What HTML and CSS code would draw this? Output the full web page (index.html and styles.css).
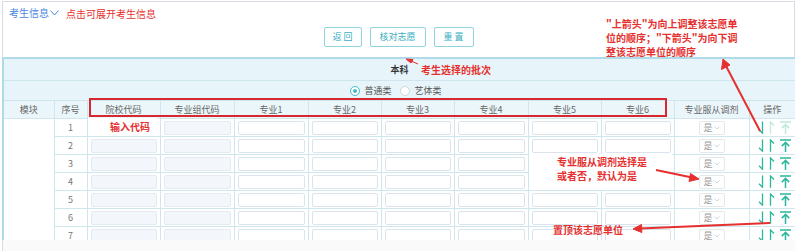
FILE: index.html
```html
<!DOCTYPE html>
<html lang="zh-CN">
<head>
<meta charset="utf-8">
<title>志愿填报</title>
<link rel="stylesheet" href="styles.css">
</head>
<body>
<div class="page">
  <div class="top">
    <div class="info">考生信息<svg class="info-chev" width="9" height="6" viewBox="0 0 9 6"><path d="M0.6 0.6L4.5 5L8.4 0.6" fill="none" stroke="#4a86e0" stroke-width="1"/></svg></div>
    <div class="actions">
      <button class="btn btn-back">返 回</button>
      <button class="btn btn-check">核对志愿</button>
      <button class="btn btn-reset">重 置</button>
    </div>
  </div>
  <div class="table-wrap">
    <table class="tbl">
      <colgroup>
        <col class="c-mod"><col class="c-idx"><col class="c-code"><col class="c-code2">
        <col class="c-m1"><col class="c-m2"><col class="c-m3"><col class="c-m4"><col class="c-m5"><col class="c-m6">
        <col class="c-adj"><col class="c-ops">
      </colgroup>
      <tr class="batch"><td colspan="12">本科</td></tr>
      <tr class="type"><td colspan="12">
        <span class="radios">
          <span class="radio on"><span class="dot"></span></span><span class="rlabel">普通类</span>
          <span class="radio"></span><span class="rlabel">艺体类</span>
        </span>
      </td></tr>
      <tr class="head">
        <th>模块</th><th>序号</th><th>院校代码</th><th>专业组代码</th>
        <th>专业1</th><th>专业2</th><th>专业3</th><th>专业4</th><th>专业5</th><th>专业6</th>
        <th>专业服从调剂</th><th>操作</th>
      </tr>
      <tr class="row">
        <td class="mod" rowspan="7"></td>
        <td class="idx">1</td>
        <td><div class="ipt fill"></div></td><td><div class="ipt fill"></div></td>
        <td><div class="ipt"></div></td><td><div class="ipt"></div></td><td><div class="ipt"></div></td>
        <td><div class="ipt"></div></td><td><div class="ipt"></div></td><td><div class="ipt"></div></td>
        <td><span class="sel">是<svg width="6" height="4" viewBox="0 0 6 4"><path d="M0.5 0.5L3 3L5.5 0.5" fill="none" stroke="#ccd1d7" stroke-width="0.9"/></svg></span></td>
        <td class="ops"><span class="op-icons">
          <svg class="op" width="6" height="13" viewBox="0 0 6 13"><path d="M4.5 0.5V12.2L1 8.7" fill="none" stroke="currentColor" stroke-width="1.3"/></svg>
          <svg class="op off" width="6" height="13" viewBox="0 0 6 13"><path d="M1.5 12.8V1L5 4.5" fill="none" stroke="currentColor" stroke-width="1.3"/></svg>
          <svg class="op off" width="11" height="13" viewBox="0 0 11 13"><path d="M0 1H11M5.5 13V3.4M1.8 7.1L5.5 3.4L9.2 7.1" fill="none" stroke="currentColor" stroke-width="1.5"/></svg>
        </span></td>
      </tr>
      <tr class="row">
        <td class="idx">2</td>
        <td><div class="ipt fill"></div></td><td><div class="ipt fill"></div></td>
        <td><div class="ipt"></div></td><td><div class="ipt"></div></td><td><div class="ipt"></div></td>
        <td><div class="ipt"></div></td><td><div class="ipt"></div></td><td><div class="ipt"></div></td>
        <td><span class="sel">是<svg width="6" height="4" viewBox="0 0 6 4"><path d="M0.5 0.5L3 3L5.5 0.5" fill="none" stroke="#ccd1d7" stroke-width="0.9"/></svg></span></td>
        <td class="ops"><span class="op-icons">
          <svg class="op" width="6" height="13" viewBox="0 0 6 13"><path d="M4.5 0.5V12.2L1 8.7" fill="none" stroke="currentColor" stroke-width="1.3"/></svg>
          <svg class="op" width="6" height="13" viewBox="0 0 6 13"><path d="M1.5 12.8V1L5 4.5" fill="none" stroke="currentColor" stroke-width="1.3"/></svg>
          <svg class="op" width="11" height="13" viewBox="0 0 11 13"><path d="M0 1H11M5.5 13V3.4M1.8 7.1L5.5 3.4L9.2 7.1" fill="none" stroke="currentColor" stroke-width="1.5"/></svg>
        </span></td>
      </tr>
      <tr class="row">
        <td class="idx">3</td>
        <td><div class="ipt fill"></div></td><td><div class="ipt fill"></div></td>
        <td><div class="ipt"></div></td><td><div class="ipt"></div></td><td><div class="ipt"></div></td>
        <td><div class="ipt"></div></td><td><div class="ipt"></div></td><td><div class="ipt"></div></td>
        <td><span class="sel">是<svg width="6" height="4" viewBox="0 0 6 4"><path d="M0.5 0.5L3 3L5.5 0.5" fill="none" stroke="#ccd1d7" stroke-width="0.9"/></svg></span></td>
        <td class="ops"><span class="op-icons">
          <svg class="op" width="6" height="13" viewBox="0 0 6 13"><path d="M4.5 0.5V12.2L1 8.7" fill="none" stroke="currentColor" stroke-width="1.3"/></svg>
          <svg class="op" width="6" height="13" viewBox="0 0 6 13"><path d="M1.5 12.8V1L5 4.5" fill="none" stroke="currentColor" stroke-width="1.3"/></svg>
          <svg class="op" width="11" height="13" viewBox="0 0 11 13"><path d="M0 1H11M5.5 13V3.4M1.8 7.1L5.5 3.4L9.2 7.1" fill="none" stroke="currentColor" stroke-width="1.5"/></svg>
        </span></td>
      </tr>
      <tr class="row">
        <td class="idx">4</td>
        <td><div class="ipt fill"></div></td><td><div class="ipt fill"></div></td>
        <td><div class="ipt"></div></td><td><div class="ipt"></div></td><td><div class="ipt"></div></td>
        <td><div class="ipt"></div></td><td><div class="ipt"></div></td><td><div class="ipt"></div></td>
        <td><span class="sel">是<svg width="6" height="4" viewBox="0 0 6 4"><path d="M0.5 0.5L3 3L5.5 0.5" fill="none" stroke="#ccd1d7" stroke-width="0.9"/></svg></span></td>
        <td class="ops"><span class="op-icons">
          <svg class="op" width="6" height="13" viewBox="0 0 6 13"><path d="M4.5 0.5V12.2L1 8.7" fill="none" stroke="currentColor" stroke-width="1.3"/></svg>
          <svg class="op" width="6" height="13" viewBox="0 0 6 13"><path d="M1.5 12.8V1L5 4.5" fill="none" stroke="currentColor" stroke-width="1.3"/></svg>
          <svg class="op" width="11" height="13" viewBox="0 0 11 13"><path d="M0 1H11M5.5 13V3.4M1.8 7.1L5.5 3.4L9.2 7.1" fill="none" stroke="currentColor" stroke-width="1.5"/></svg>
        </span></td>
      </tr>
      <tr class="row">
        <td class="idx">5</td>
        <td><div class="ipt fill"></div></td><td><div class="ipt fill"></div></td>
        <td><div class="ipt"></div></td><td><div class="ipt"></div></td><td><div class="ipt"></div></td>
        <td><div class="ipt"></div></td><td><div class="ipt"></div></td><td><div class="ipt"></div></td>
        <td><span class="sel">是<svg width="6" height="4" viewBox="0 0 6 4"><path d="M0.5 0.5L3 3L5.5 0.5" fill="none" stroke="#ccd1d7" stroke-width="0.9"/></svg></span></td>
        <td class="ops"><span class="op-icons">
          <svg class="op" width="6" height="13" viewBox="0 0 6 13"><path d="M4.5 0.5V12.2L1 8.7" fill="none" stroke="currentColor" stroke-width="1.3"/></svg>
          <svg class="op" width="6" height="13" viewBox="0 0 6 13"><path d="M1.5 12.8V1L5 4.5" fill="none" stroke="currentColor" stroke-width="1.3"/></svg>
          <svg class="op" width="11" height="13" viewBox="0 0 11 13"><path d="M0 1H11M5.5 13V3.4M1.8 7.1L5.5 3.4L9.2 7.1" fill="none" stroke="currentColor" stroke-width="1.5"/></svg>
        </span></td>
      </tr>
      <tr class="row">
        <td class="idx">6</td>
        <td><div class="ipt fill"></div></td><td><div class="ipt fill"></div></td>
        <td><div class="ipt"></div></td><td><div class="ipt"></div></td><td><div class="ipt"></div></td>
        <td><div class="ipt"></div></td><td><div class="ipt"></div></td><td><div class="ipt"></div></td>
        <td><span class="sel">是<svg width="6" height="4" viewBox="0 0 6 4"><path d="M0.5 0.5L3 3L5.5 0.5" fill="none" stroke="#ccd1d7" stroke-width="0.9"/></svg></span></td>
        <td class="ops"><span class="op-icons">
          <svg class="op" width="6" height="13" viewBox="0 0 6 13"><path d="M4.5 0.5V12.2L1 8.7" fill="none" stroke="currentColor" stroke-width="1.3"/></svg>
          <svg class="op" width="6" height="13" viewBox="0 0 6 13"><path d="M1.5 12.8V1L5 4.5" fill="none" stroke="currentColor" stroke-width="1.3"/></svg>
          <svg class="op" width="11" height="13" viewBox="0 0 11 13"><path d="M0 1H11M5.5 13V3.4M1.8 7.1L5.5 3.4L9.2 7.1" fill="none" stroke="currentColor" stroke-width="1.5"/></svg>
        </span></td>
      </tr>
      <tr class="row">
        <td class="idx">7</td>
        <td><div class="ipt fill"></div></td><td><div class="ipt fill"></div></td>
        <td><div class="ipt"></div></td><td><div class="ipt"></div></td><td><div class="ipt"></div></td>
        <td><div class="ipt"></div></td><td><div class="ipt"></div></td><td><div class="ipt"></div></td>
        <td><span class="sel">是<svg width="6" height="4" viewBox="0 0 6 4"><path d="M0.5 0.5L3 3L5.5 0.5" fill="none" stroke="#ccd1d7" stroke-width="0.9"/></svg></span></td>
        <td class="ops"><span class="op-icons">
          <svg class="op" width="6" height="13" viewBox="0 0 6 13"><path d="M4.5 0.5V12.2L1 8.7" fill="none" stroke="currentColor" stroke-width="1.3"/></svg>
          <svg class="op" width="6" height="13" viewBox="0 0 6 13"><path d="M1.5 12.8V1L5 4.5" fill="none" stroke="currentColor" stroke-width="1.3"/></svg>
          <svg class="op" width="11" height="13" viewBox="0 0 11 13"><path d="M0 1H11M5.5 13V3.4M1.8 7.1L5.5 3.4L9.2 7.1" fill="none" stroke="currentColor" stroke-width="1.5"/></svg>
        </span></td>
      </tr>
    </table>
  </div>
  <div class="footer"></div>

  <!-- annotations -->
  <div class="note note-expand">点击可展开考生信息</div>
  <div class="note note-arrows">"上箭头"为向上调整该志愿单<br>位的顺序；"下箭头"为向下调<br>整该志愿单位的顺序</div>
  <div class="note note-batch">考生选择的批次</div>
  <div class="note note-code">输入代码</div>
  <div class="note note-adjust">专业服从调剂选择是<br>或者否，默认为是</div>
  <div class="note note-top">置顶该志愿单位</div>
  <div class="red-frame"></div>
  <svg class="arrows" width="797" height="251" viewBox="0 0 797 251">
    <g stroke="#e5302f" fill="#e5302f">
      <line x1="418" y1="64" x2="411" y2="61" stroke-width="1"/>
      <polygon points="406,59 413,59.5 411,63"/>
      <line x1="760" y1="131" x2="726" y2="66" stroke-width="2"/>
      <polygon points="723,59 721.5,69.5 730,65"/>
      <line x1="656" y1="170" x2="692" y2="177.5" stroke-width="2"/>
      <polygon points="699,179 690.5,173.5 689,181.5"/>
      <line x1="770" y1="223" x2="640" y2="228.5" stroke-width="2"/>
      <polygon points="633,229 641.5,224.5 641.8,232.5"/>
    </g>
  </svg>
</div>
</body>
</html>
```

FILE: styles.css
```css
body {
  margin: 0;
  font-family: "Noto Sans CJK SC", "Noto Sans", sans-serif;
  background: #fff;
}

.page {
  position: relative;
  width: 797px;
  height: 251px;
  overflow: hidden;
  padding: 1px 2px 0;
  box-sizing: border-box;
  background: #fff;
}

.top {
  height: 56px;
  border: 1px solid #d9dde3;
  border-bottom: none;
  box-sizing: border-box;
}

.info {
  height: 20px;
  padding-left: 6px;
  font-size: 10px;
  line-height: 17px;
  color: #4a86e0;
  display: flex;
  align-items: center;
}

.info-chev {
  margin-left: 1px;
  margin-top: 1px;
}

.actions {
  display: flex;
  justify-content: center;
  gap: 8px;
  padding-top: 5px;
}

.btn {
  height: 20px;
  box-sizing: border-box;
  border: 1px solid #8fd3db;
  border-radius: 2px;
  background: #fff;
  color: #3aafbf;
  font-family: inherit;
  font-size: 9px;
  line-height: 18px;
  padding: 0;
}

.btn-back { width: 38px; }
.btn-check { width: 56px; }
.btn-reset { width: 40px; }

.table-wrap {
  height: 183px;
  overflow: hidden;
}

.tbl {
  width: 793px;
  table-layout: fixed;
  border-collapse: collapse;
  border: 2px solid #aedbe7;
  font-size: 9px;
  color: #666;
}

.c-mod { width: 51px; }
.c-idx { width: 33px; }
.c-code { width: 73px; }
.c-code2 { width: 74px; }
.c-m1 { width: 74px; }
.c-m2 { width: 73px; }
.c-m3 { width: 73px; }
.c-m4 { width: 74px; }
.c-m5 { width: 73px; }
.c-m6 { width: 73px; }
.c-adj { width: 75px; }
.c-ops { width: 47px; }

.tbl td,
.tbl th {
  border: 1px solid #cfe6ee;
  padding: 0;
  text-align: center;
  vertical-align: middle;
}

.batch td {
  height: 21px;
  background: #e7f4f9;
  font-weight: bold;
  color: #333;
  line-height: 12px;
}

.type td {
  height: 19px;
  background: #e7f4f9;
  line-height: 12px;
}

.radios {
  display: inline-flex;
  align-items: center;
  color: #555;
}

.radio {
  width: 8px;
  height: 8px;
  border: 1px solid #cdd6de;
  border-radius: 50%;
  background: #fff;
  display: inline-flex;
  align-items: center;
  justify-content: center;
  margin-right: 5px;
}

.radio.on {
  border-color: #45bccb;
}

.dot {
  width: 4px;
  height: 4px;
  border-radius: 50%;
  background: #45bccb;
}

.rlabel {
  margin-right: 8px;
}

.head th {
  height: 17px;
  background: #ebf6fa;
  font-weight: normal;
  color: #666;
  line-height: 12px;
}

.row td {
  height: 17px;
  background: #fff;
  line-height: 12px;
}

.idx {
  color: #777;
}

.ipt {
  height: 12px;
  margin: 0 3px;
  border: 1px solid #dbe3ec;
  border-radius: 2px;
  background: #fff;
}

.ipt.fill {
  background: #f3f7fb;
  border-color: #e4eaf1;
}

.sel {
  display: inline-flex;
  align-items: center;
  justify-content: center;
  gap: 1px;
  width: 26px;
  height: 14px;
  box-sizing: border-box;
  border: 1px solid #e3e8ed;
  border-radius: 2px;
  color: #999;
  font-size: 9px;
  line-height: 12px;
}

.ops {
  text-align: left !important;
}

.op-icons {
  display: flex;
  align-items: center;
  padding-left: 8px;
  color: #2bb79b;
}

.op + .op {
  margin-left: 5px;
}

.op.off {
  color: #bfe8de;
}

.footer {
  height: 11px;
  border-left: 1px solid #dadde2;
  background: #fafafa;
}

.note {
  position: absolute;
  color: #e5302f;
  font-size: 10px;
  line-height: 14px;
  white-space: nowrap;
}

.note-expand {
  left: 66px;
  top: 7px;
}

.note-arrows {
  left: 606px;
  top: 17px;
  font-weight: bold;
}

.note-batch {
  left: 421px;
  top: 63px;
  font-weight: bold;
}

.note-code {
  left: 88px;
  top: 118px;
  width: 70px;
  height: 17px;
  line-height: 17px;
  padding-left: 22px;
  box-sizing: border-box;
  background: #fff;
  font-weight: bold;
}

.note-adjust {
  left: 529px;
  top: 154px;
  width: 143px;
  height: 36px;
  padding: 1px 0 0 28px;
  box-sizing: border-box;
  line-height: 13.5px;
  background: #fff;
  font-weight: bold;
}

.note-top {
  left: 553px;
  top: 223px;
  font-weight: bold;
}

.red-frame {
  position: absolute;
  left: 89px;
  top: 98px;
  width: 578px;
  height: 19px;
  border: 2px solid #d8282f;
  box-sizing: border-box;
}

.arrows {
  position: absolute;
  left: 0;
  top: 0;
  pointer-events: none;
}
```
